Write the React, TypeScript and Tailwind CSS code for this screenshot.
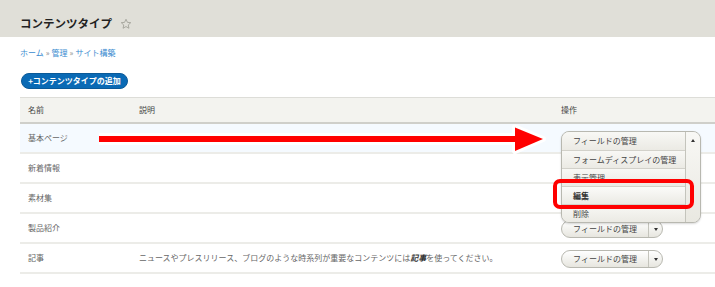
import React from 'react';

const font = { fontFamily: '"Noto Sans CJK JP", "Noto Sans", sans-serif' };

type Row = { name: string; desc?: React.ReactNode; open?: boolean; covered?: boolean; bg?: boolean };

const rows: Row[] = [
  { name: '基本ページ', open: true, bg: true },
  { name: '新着情報', covered: true },
  { name: '素材集', covered: true },
  { name: '製品紹介' },
  {
    name: '記事',
    desc: (
      <>
        ニュースやプレスリリース、ブログのような時系列が重要なコンテンツには
        <em className="font-bold text-[#333]">記事</em>を使ってください。
      </>
    ),
  },
];

const menuItems = ['フィールドの管理', 'フォームディスプレイの管理', '表示管理', '編集', '削除'];

function DropButton() {
  return (
    <div className="flex h-[18px] w-[102px] items-stretch rounded-full border border-[#b8b8b0] bg-gradient-to-b from-white to-[#e7e6df] text-[#444]">
      <div className="flex w-[86px] items-center justify-center">フィールドの管理</div>
      <div className="flex flex-1 items-center justify-center border-l border-[#c4c4bc]">
        <span className="block h-0 w-0 border-x-[2.5px] border-t-[3px] border-x-transparent border-t-[#333]" />
      </div>
    </div>
  );
}

function OpenDropButton() {
  return (
    <div className="absolute left-0 top-[1px] z-10 flex w-[140px] rounded-[8px] border border-[#b8b8b0] bg-[#eeede7] text-[#444] shadow-[0_1px_2px_rgba(0,0,0,0.15)]">
      <div className="flex w-[123px] flex-col">
        {menuItems.map((item, i) => (
          <div
            key={item}
            className={
              'flex h-[18px] items-center pl-[11px] ' +
              (i > 0 ? 'border-t border-[#d2d1ca] ' : '') +
              (item === '編集'
                ? 'bg-gradient-to-b from-[#fbfbf9] to-[#ebeae4] font-semibold text-[#333]'
                : 'bg-gradient-to-b from-[#f8f8f5] to-[#ebeae4]') +
              (i === 0 ? ' rounded-tl-[7px]' : '') +
              (i === menuItems.length - 1 ? ' rounded-bl-[7px]' : '')
            }
          >
            {item}
          </div>
        ))}
      </div>
      <div className="flex flex-1 justify-center rounded-r-[7px] border-l border-[#c4c4bc] bg-gradient-to-b from-[#f8f8f5] to-[#e9e8e1] pt-[7px]">
        <span className="block h-0 w-0 border-x-[2.5px] border-b-[3px] border-x-transparent border-b-[#333]" />
      </div>
    </div>
  );
}

export default function App() {
  return (
    <div className="relative h-[287px] w-[715px] overflow-hidden bg-white" style={font}>
      <div className="h-[37px] bg-[#e0dfd8] pl-[20px] pt-[15px]">
        <div className="flex items-center gap-[8px] text-[11.5px] font-bold leading-[17px] text-[#222]">
          コンテンツタイプ
          <svg width="12" height="12" viewBox="0 0 24 24" className="mt-[1px]">
            <path
              d="M12 2.5l2.9 6.2 6.6.7-5 4.5 1.4 6.6L12 17.1l-5.9 3.4 1.4-6.6-5-4.5 6.6-.7z"
              fill="none"
              stroke="#9a9a92"
              strokeWidth="1.6"
              strokeLinejoin="round"
            />
          </svg>
        </div>
      </div>

      <div className="ml-[20px] mt-[11px] flex items-center gap-[2px] text-[8px] leading-[10px] text-[#3a8cd0]">
        <span>ホーム</span>
        <span className="text-[#888]">»</span>
        <span>管理</span>
        <span className="text-[#888]">»</span>
        <span>サイト構築</span>
      </div>

      <div className="ml-[21px] mt-[15px] flex h-[16px] w-[107px] items-center justify-center rounded-full border border-[#0b5a98] bg-[#0a6ab5] text-[8px] font-bold text-white">
        +コンテンツタイプの追加
      </div>

      <div className="ml-[20px] mt-[8px] text-[8px] text-[#666]">
        <div className="grid h-[27px] grid-cols-[111px_422px_1fr] items-center border-y border-t-[#ddddd8] border-b-2 border-b-[#cfcfca] bg-[#f3f3ef] text-[#444]">
          <div className="pl-[8px]">名前</div>
          <div className="pl-[8px]">説明</div>
          <div className="pl-[8px]">操作</div>
        </div>
        {rows.map((r) => (
          <div
            key={r.name}
            className={
              'grid h-[30px] grid-cols-[111px_422px_1fr] items-center border-b-2 border-[#ecece8] ' +
              (r.bg ? 'bg-[#f5faff]' : 'bg-white')
            }
          >
            <div className="pl-[8px]">{r.name}</div>
            <div className="whitespace-nowrap pl-[8px]">{r.desc}</div>
            <div className="relative pl-[8px] pt-[2px]">
              {r.open ? (
                <div className="relative h-[18px]">
                  <OpenDropButton />
                </div>
              ) : r.covered ? (
                <div className="h-[18px]" />
              ) : (
                <DropButton />
              )}
            </div>
          </div>
        ))}
      </div>

      <svg className="pointer-events-none absolute left-0 top-0 z-20" width="715" height="287">
        <g stroke="#ffffff" strokeWidth="6" strokeLinejoin="round" fill="#ffffff">
          <line x1="99" y1="139" x2="518" y2="139" strokeWidth="12" />
          <polygon points="515,127.5 543,139 515,151" />
        </g>
        <line x1="99" y1="139" x2="518" y2="139" stroke="#ff0000" strokeWidth="6" />
        <polygon points="515,127.5 543,139 515,151" fill="#ff0000" />
        <rect x="555" y="181" width="137" height="26" rx="5" fill="none" stroke="#ff0000" strokeWidth="4" />
      </svg>
    </div>
  );
}
